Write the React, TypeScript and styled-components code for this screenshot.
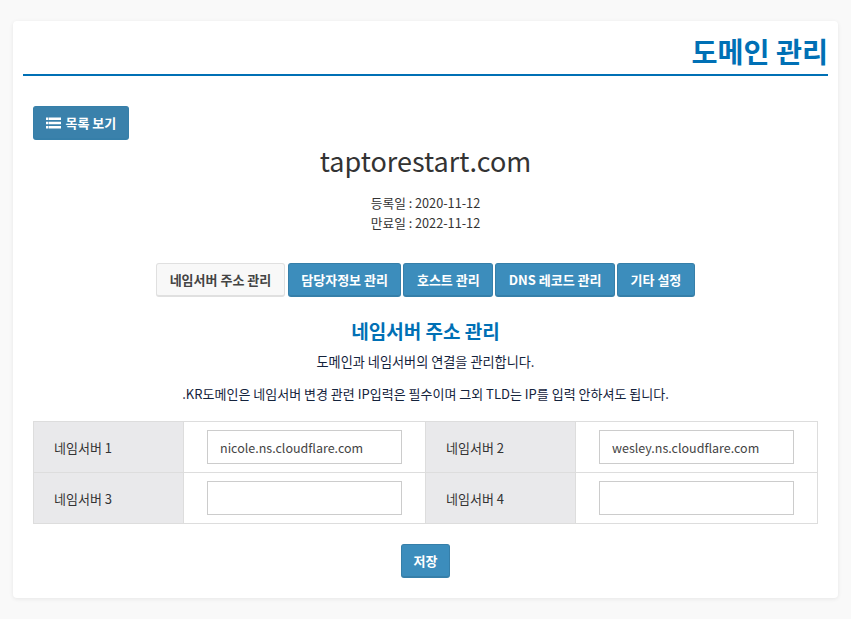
import React from 'react'
import styled, { createGlobalStyle } from 'styled-components'

const GlobalStyle = createGlobalStyle`
  html, body {
    margin: 0;
    padding: 0;
    background: #f9f9f9;
    font-family: "Noto Sans CJK KR", "Noto Sans", sans-serif;
    color: #333;
  }
  * {
    box-sizing: border-box;
  }
`

const tabs = ['담당자정보 관리', '호스트 관리', 'DNS 레코드 관리', '기타 설정']

const ListIcon = () => (
  <svg width="15" height="12" viewBox="0 0 15 12" fill="currentColor">
    <path d="M0 0.5h2.5v2.5H0zM3 0.5h12v2.5H3zM0 4.75h2.5v2.5H0zM3 4.75h12v2.5H3zM0 9h2.5v2.5H0zM3 9h12v2.5H3z" />
  </svg>
)

const App = () => {
  return (
    <Page>
      <GlobalStyle />
      <Card>
        <Title>도메인 관리</Title>
        <Body>
          <ListButton>
            <ListIcon />
            목록 보기
          </ListButton>
          <DomainName>taptorestart.com</DomainName>
          <Dates>
            <div>등록일 : 2020-11-12</div>
            <div>만료일 : 2022-11-12</div>
          </Dates>
          <Tabs>
            <ActiveTab>네임서버 주소 관리</ActiveTab>
            {tabs.map((t) => (
              <TabButton key={t}>{t}</TabButton>
            ))}
          </Tabs>
          <SectionTitle>네임서버 주소 관리</SectionTitle>
          <Description>도메인과 네임서버의 연결을 관리합니다.</Description>
          <Note>
            .KR도메인은 네임서버 변경 관련 IP입력은 필수이며 그외 TLD는 IP를 입력 안하셔도 됩니다.
          </Note>
          <Table>
            <tbody>
              <tr>
                <LabelCell>네임서버 1</LabelCell>
                <InputCell>
                  <Input defaultValue="nicole.ns.cloudflare.com" />
                </InputCell>
                <LabelCell>네임서버 2</LabelCell>
                <InputCell>
                  <Input defaultValue="wesley.ns.cloudflare.com" />
                </InputCell>
              </tr>
              <tr>
                <LabelCell>네임서버 3</LabelCell>
                <InputCell>
                  <Input />
                </InputCell>
                <LabelCell>네임서버 4</LabelCell>
                <InputCell>
                  <Input />
                </InputCell>
              </tr>
            </tbody>
          </Table>
          <Footer>
            <SaveButton>저장</SaveButton>
          </Footer>
        </Body>
      </Card>
    </Page>
  )
}

export default App

const Page = styled.div`
  padding: 21px 13px;
  width: 851px;
  height: 619px;
  overflow: hidden;
`

const Card = styled.div`
  width: 825px;
  height: 577px;
  background: #fff;
  border-radius: 4px;
  box-shadow: 0 1px 4px rgba(0, 0, 0, 0.08);
  padding: 0 10px;
`

const Title = styled.h1`
  margin: 0;
  height: 55px;
  padding-top: 9px;
  border-bottom: 2px solid #0070b5;
  color: #0070b5;
  font-size: 28.3px;
  font-weight: 700;
  line-height: 42px;
  text-align: right;
`

const Body = styled.div`
  padding: 30px 10px 0;
`

const Button = styled.button`
  display: inline-flex;
  align-items: center;
  justify-content: center;
  gap: 5px;
  height: 34px;
  padding: 0 12.5px;
  background: #3c8dbc;
  border: 1px solid #367fa9;
  border-bottom-width: 2px;
  border-radius: 3px;
  color: #fff;
  font-family: inherit;
  font-size: 13px;
  font-weight: 700;
  white-space: nowrap;
`

const ListButton = styled(Button)`
  padding: 0 11.5px;
  background: #3a81ab;
`

const DomainName = styled.div`
  margin-top: 1px;
  font-size: 27px;
  line-height: 40px;
  text-align: center;
`

const Dates = styled.div`
  margin-top: 12px;
  font-size: 12.7px;
  line-height: 20px;
  text-align: center;
`

const Tabs = styled.div`
  display: flex;
  justify-content: center;
  gap: 2px;
  margin-top: 30px;
`

const TabButton = styled(Button)``

const SaveButton = styled(Button)`
  padding: 0 12px;
`

const ActiveTab = styled(Button)`
  margin-right: 1px;
  padding: 0 12.5px;
  background: #f8f8f8;
  border: 1px solid #e0e0e0;
  border-bottom-width: 2px;
  color: #444;
`

const SectionTitle = styled.h3`
  margin: 16px 0 0;
  color: #0070b5;
  font-size: 19px;
  font-weight: 700;
  line-height: 36px;
  text-align: center;
`

const Description = styled.p`
  margin: 1px 0 0;
  color: #14233c;
  font-size: 13.15px;
  line-height: 24px;
  text-align: center;
`

const Note = styled(Description)`
  margin-top: 8px;
  font-size: 13px;
`

const Table = styled.table`
  width: 785px;
  margin-top: 15px;
  border-collapse: collapse;
  table-layout: fixed;
`

const LabelCell = styled.th`
  width: 150px;
  height: 51px;
  padding: 0 0 0 20px;
  background: #e9e9eb;
  border: 1px solid #ddd;
  font-size: 13px;
  font-weight: 400;
  text-align: left;
`

const InputCell = styled.td`
  padding: 0 23px;
  border: 1px solid #ddd;
`

const Input = styled.input`
  display: block;
  width: 195px;
  height: 34px;
  padding: 0 12px;
  background: #fff;
  border: 1px solid #ccc;
  color: #444;
  font-family: inherit;
  font-size: 12.5px;
  outline: none;
`

const Footer = styled.div`
  display: flex;
  justify-content: center;
  margin-top: 20px;
`
